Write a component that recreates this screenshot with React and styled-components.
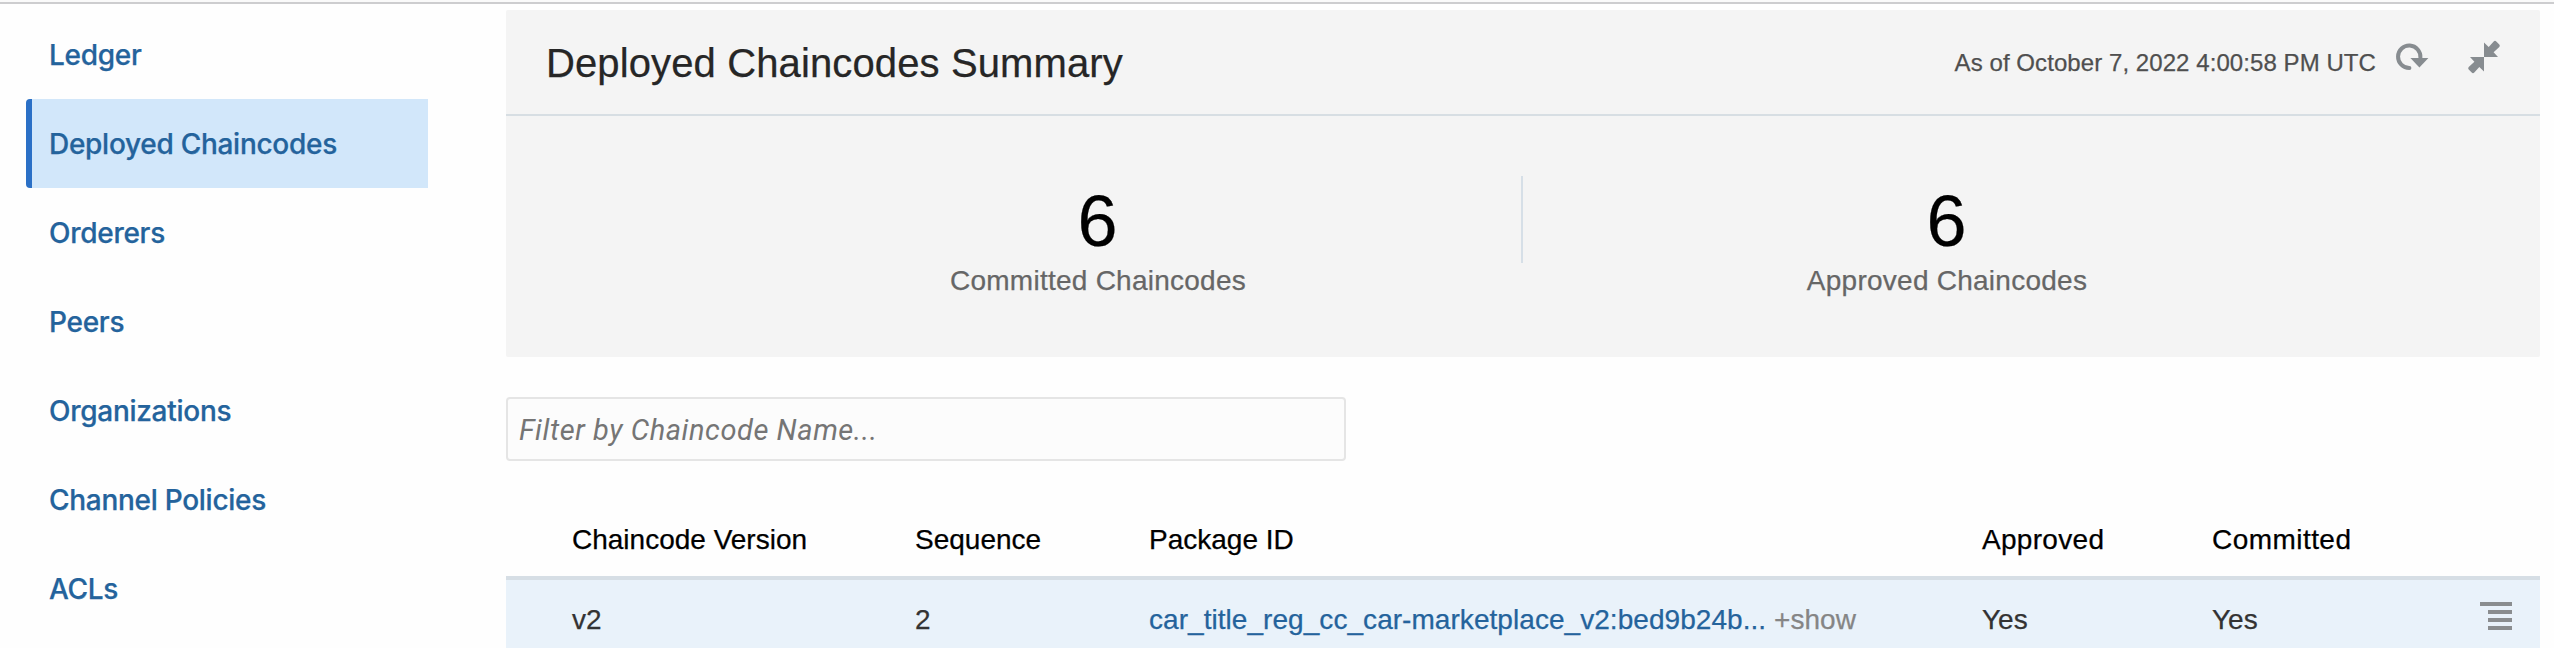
import React from "react";
import styled, { createGlobalStyle } from "styled-components";

const GlobalStyle = createGlobalStyle`
  * { box-sizing: border-box; }
  body {
    margin: 0;
    background: #fff;
    font-family: "Liberation Sans", Arial, sans-serif;
    -webkit-text-stroke: 0.25px currentColor;
  }
`;

const Page = styled.div`
  height: 648px;
  overflow: hidden;
  background: #fefefe;
`;

const TopRule = styled.div`
  height: 4px;
  background: #fafafa;
  border-bottom: 2px solid #cdcdcf;
`;

const Layout = styled.div`
  display: flex;
  padding-top: 6px;
`;

const Sidebar = styled.nav`
  display: flex;
  flex-direction: column;
  flex: none;
  width: 402px;
  margin: 0 78px 0 26px;
`;

const NavItem = styled.a`
  height: 89px;
  line-height: 90px;
  padding-left: 17px;
  border-left: 6px solid ${(p) => (p.$active ? "#2b70c6" : "transparent")};
  border-radius: 4px 0 0 4px;
  background: ${(p) => (p.$active ? "#d2e7fa" : "transparent")};
  color: #24639c;
  font-family: Inter, sans-serif;
  font-size: 28px;
  font-weight: 500;
  letter-spacing: -0.28px;
  white-space: nowrap;
`;

const Main = styled.main`
  width: 2034px;
  flex: none;
`;

const Summary = styled.section`
  height: 347px;
  background: #f4f4f4;
  border-radius: 2px;
`;

const SummaryHeader = styled.header`
  display: flex;
  height: 106px;
  padding: 0 39px 0 40px;
  border-bottom: 2px solid #d7dee3;
`;

const Title = styled.h1`
  margin: 0 auto 0 0;
  font-size: 40px;
  font-weight: 400;
  line-height: 106px;
  letter-spacing: 0.12px;
  color: #262626;
`;

const Timestamp = styled.span`
  margin-right: 19px;
  font-size: 24px;
  line-height: 105px;
  letter-spacing: 0.07px;
  color: #4f4f4f;
`;

const IconButton = styled.span`
  display: block;
  width: 34px;
  height: 34px;
  margin: 30px ${(p) => p.$gap || 0} 0 0;
  svg { display: block; }
`;

const Stats = styled.div`
  display: flex;
  justify-content: center;
  align-items: flex-start;
  padding: 60px 2px 0 0;
`;

const Stat = styled.div`
  width: 847px;
  padding-top: 9px;
  text-align: center;
`;

const StatValue = styled.div`
  font-size: 72px;
  line-height: 72px;
  color: #000;
`;

const StatLabel = styled.div`
  margin-top: 8px;
  padding-left: 1px;
  font-size: 28px;
  line-height: 32px;
  letter-spacing: 0.25px;
  color: #666;
`;

const StatDivider = styled.div`
  width: 2px;
  height: 87px;
  background: #d6dfe7;
`;

const Filter = styled.input`
  display: block;
  width: 840px;
  height: 64px;
  margin: 40px 0 41px;
  padding: 2px 11px 0;
  border: 2px solid #e5e5e5;
  border-radius: 4px;
  background: #fcfcfc;
  font-family: Roboto, sans-serif;
  font-size: 29px;
  font-style: italic;
  letter-spacing: 0.57px;
  -webkit-text-stroke: 0;
  &::placeholder { color: #757575; opacity: 1; }
`;

const Row = styled.div`
  display: grid;
  grid-template-columns: 343px 234px 833px 230px 1fr;
  align-items: center;
  padding: 2px 28px 0 66px;
  font-size: 28px;
  white-space: nowrap;
`;

const HeadRow = styled(Row)`
  height: 78px;
  border-bottom: 4px solid #d6dee5;
  color: #000;
`;

const HeadCell = styled.span`
  letter-spacing: ${(p) => p.$track || "0"};
`;

const BodyRow = styled(Row)`
  height: 78px;
  background: #e9f2fa;
  color: #333;
`;

const LastCell = styled.div`
  display: flex;
  justify-content: space-between;
  align-items: center;
`;

const PackageId = styled.span`
  letter-spacing: 0.05px;
`;

const PackageLink = styled.a`
  color: #24639c;
`;

const ShowMore = styled.span`
  color: #858585;
`;

const MenuIcon = styled.svg`
  display: block;
  margin-top: -8px;
`;

const NAV = [
  { label: "Ledger" },
  { label: "Deployed Chaincodes", active: true },
  { label: "Orderers" },
  { label: "Peers" },
  { label: "Organizations" },
  { label: "Channel Policies" },
  { label: "ACLs" },
];

const STATS = [
  { value: 6, label: "Committed Chaincodes" },
  { value: 6, label: "Approved Chaincodes" },
];

function RefreshIcon() {
  return (
    <svg width="34" height="34" viewBox="0 0 34 34">
      <path d="M14.4 28A11.2 11.2 0 1 1 25.4 17.8" fill="none" stroke="#878c90" strokeWidth="4" strokeLinecap="round" />
      <path d="M15.4 18H33.4L24.4 27.4Z" fill="#878c90" />
    </svg>
  );
}

function CollapseIcon() {
  const arrow = "M17 17V2.6L21.7 7.1L26.7 1.4Q28 .2 29.3 1.4L32.3 4.6Q33.4 5.8 32.3 7L26.6 12.2L31 17Z";
  return (
    <svg width="34" height="34" viewBox="0 0 34 34" fill="#878c90">
      <path d={arrow} />
      <path d={arrow} transform="rotate(180 17 17)" />
    </svg>
  );
}

export default function App() {
  return (
    <Page>
      <GlobalStyle />
      <TopRule />
      <Layout>
        <Sidebar>
          {NAV.map((n) => (
            <NavItem key={n.label} $active={n.active}>{n.label}</NavItem>
          ))}
        </Sidebar>
        <Main>
          <Summary>
            <SummaryHeader>
              <Title>Deployed Chaincodes Summary</Title>
              <Timestamp>As of October 7, 2022 4:00:58 PM UTC</Timestamp>
              <IconButton $gap="38px"><RefreshIcon /></IconButton>
              <IconButton><CollapseIcon /></IconButton>
            </SummaryHeader>
            <Stats>
              <Stat>
                <StatValue>{STATS[0].value}</StatValue>
                <StatLabel>{STATS[0].label}</StatLabel>
              </Stat>
              <StatDivider />
              <Stat>
                <StatValue>{STATS[1].value}</StatValue>
                <StatLabel>{STATS[1].label}</StatLabel>
              </Stat>
            </Stats>
          </Summary>
          <Filter placeholder="Filter by Chaincode Name..." />
          <HeadRow>
            <HeadCell>Chaincode Version</HeadCell>
            <HeadCell>Sequence</HeadCell>
            <HeadCell>Package ID</HeadCell>
            <HeadCell $track="0.3px">Approved</HeadCell>
            <HeadCell $track="0.45px">Committed</HeadCell>
          </HeadRow>
          <BodyRow>
            <span>v2</span>
            <span>2</span>
            <PackageId>
              <PackageLink>car_title_reg_cc_car-marketplace_v2:bed9b24b...</PackageLink>{" "}
              <ShowMore>+show</ShowMore>
            </PackageId>
            <span>Yes</span>
            <LastCell>
              <span>Yes</span>
              <MenuIcon width="32" height="28" viewBox="0 0 32 28" fill="#8a8d8f">
                <path d="M0 0H32V4H0ZM8 8H32V12H8ZM8 16H32V20H8ZM8 24H32V28H8Z" />
              </MenuIcon>
            </LastCell>
          </BodyRow>
        </Main>
      </Layout>
    </Page>
  );
}
